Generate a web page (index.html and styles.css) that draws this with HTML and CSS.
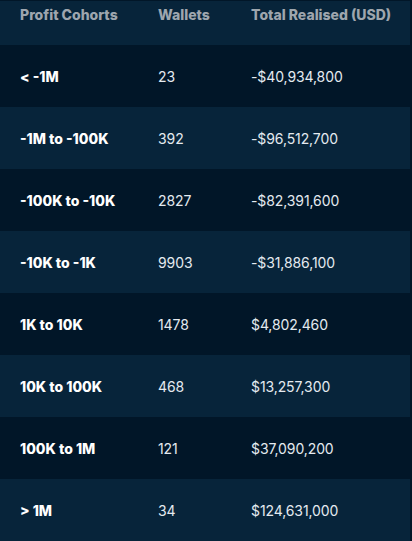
FILE: index.html
```html
<!DOCTYPE html>
<html>
<head>
<meta charset="utf-8">
<link rel="stylesheet" href="styles.css">
</head>
<body>
<div class="table">
  <div class="row head">
    <div>Profit Cohorts</div>
    <div>Wallets</div>
    <div>Total Realised (USD)</div>
  </div>
  <div class="row dark"><div class="name">&lt; -1M</div><div>23</div><div>-$40,934,800</div></div>
  <div class="row light"><div class="name">-1M to -100K</div><div>392</div><div>-$96,512,700</div></div>
  <div class="row dark"><div class="name">-100K to -10K</div><div>2827</div><div>-$82,391,600</div></div>
  <div class="row light"><div class="name">-10K to -1K</div><div>9903</div><div>-$31,886,100</div></div>
  <div class="row dark"><div class="name">1K to 10K</div><div>1478</div><div>$4,802,460</div></div>
  <div class="row light"><div class="name">10K to 100K</div><div>468</div><div>$13,257,300</div></div>
  <div class="row dark"><div class="name">100K to 1M</div><div>121</div><div>$37,090,200</div></div>
  <div class="row light"><div class="name">&gt; 1M</div><div>34</div><div>$124,631,000</div></div>
</div>
</body>
</html>
```

FILE: styles.css
```css
html, body {
  margin: 0;
  padding: 0;
  background: #011628;
  font-family: Inter, "Noto Sans", sans-serif;
  font-size: 14px;
}
.table {
  width: 410px;
  padding-top: 1px;
}
.row {
  display: grid;
  grid-template-columns: 138px 93px 1fr;
  align-items: center;
  height: 62px;
  padding-left: 20px;
  box-sizing: border-box;
  color: #e4eaf0;
  letter-spacing: -0.1px;
}
.head {
  height: 44px;
  align-items: start;
  padding-top: 5px;
  background: #07243a;
  color: #9ea6ae;
  font-weight: 800;
  letter-spacing: 0;
}
.dark { background: #011628; }
.light { background: #07243a; }
.name {
  color: #ffffff;
  font-weight: 800;
  letter-spacing: 0;
}
```
